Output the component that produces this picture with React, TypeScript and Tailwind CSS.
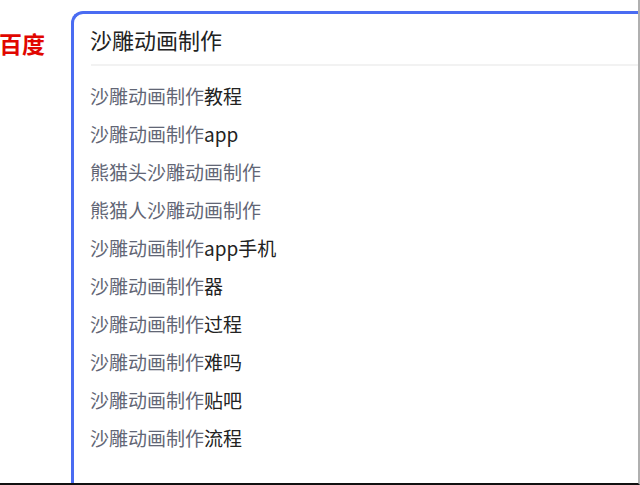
const suggestions: [string, string][] = [
  ["沙雕动画制作", "教程"],
  ["沙雕动画制作", "app"],
  ["熊猫头沙雕动画制作", ""],
  ["熊猫人沙雕动画制作", ""],
  ["沙雕动画制作", "app手机"],
  ["沙雕动画制作", "器"],
  ["沙雕动画制作", "过程"],
  ["沙雕动画制作", "难吗"],
  ["沙雕动画制作", "贴吧"],
  ["沙雕动画制作", "流程"],
];

export default function App() {
  return (
    <div
      className="flex h-[485px] w-[640px] overflow-hidden border-r-2 border-b-2 border-r-[#b0b0b0] border-b-[#111] bg-white"
      style={{ fontFamily: '"Noto Sans CJK SC", "Noto Sans", sans-serif' }}
    >
      {/* logo column */}
      <div className="w-[71px] shrink-0 pt-[28px]">
        <div className="-ml-[1px] text-[23px] font-bold leading-[30px] text-[#e10600]">百度</div>
      </div>

      {/* search box with dropdown */}
      <div className="mt-[11px] flex flex-1 flex-col rounded-tl-xl border-t-[3px] border-l-[3px] border-[#4a6cf2]">
        <div className="flex h-[50px] items-center pl-[16px] text-[22px] text-[#222]">沙雕动画制作</div>
        <div className="ml-[17px] h-[2px] bg-[#f2f2f2]" />
        <ul className="pt-[10px] pl-[16px]">
          {suggestions.map(([prefix, rest], i) => (
            <li key={i} className="flex h-[38px] items-center text-[19px] leading-none">
              <span className="text-[#626675]">{prefix}</span>
              <span className="text-[#222]">{rest}</span>
            </li>
          ))}
        </ul>
      </div>
    </div>
  );
}
